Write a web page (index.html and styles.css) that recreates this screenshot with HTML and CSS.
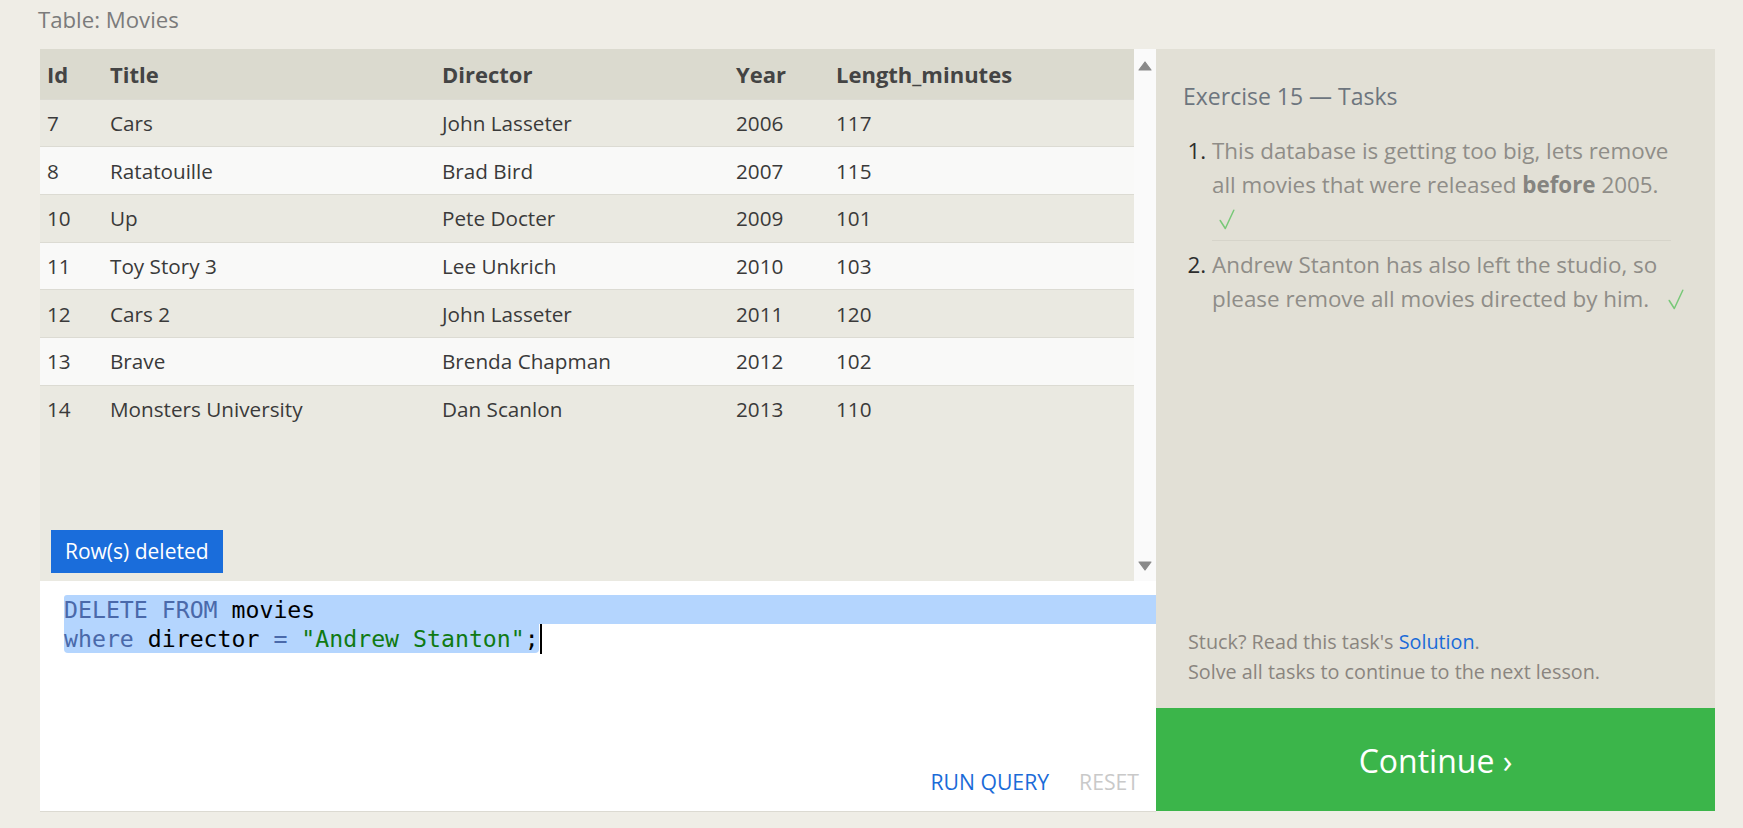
FILE: index.html
```html
<!DOCTYPE html>
<html lang="en">
<head>
<meta charset="utf-8">
<title>SQL Lesson 15: Exercise</title>
<link rel="stylesheet" href="styles.css">
</head>
<body>
<div class="page">
  <div class="table-title">Table: Movies</div>
  <div class="exercise">
    <div class="left">
      <div class="table-area">
        <div class="table-scroll">
          <table class="results">
            <thead>
              <tr><th class="c-id">Id</th><th class="c-title">Title</th><th class="c-dir">Director</th><th class="c-year">Year</th><th class="c-len">Length_minutes</th></tr>
            </thead>
            <tbody>
              <tr><td>7</td><td>Cars</td><td>John Lasseter</td><td>2006</td><td>117</td></tr>
              <tr><td>8</td><td>Ratatouille</td><td>Brad Bird</td><td>2007</td><td>115</td></tr>
              <tr><td>10</td><td>Up</td><td>Pete Docter</td><td>2009</td><td>101</td></tr>
              <tr><td>11</td><td>Toy Story 3</td><td>Lee Unkrich</td><td>2010</td><td>103</td></tr>
              <tr><td>12</td><td>Cars 2</td><td>John Lasseter</td><td>2011</td><td>120</td></tr>
              <tr><td>13</td><td>Brave</td><td>Brenda Chapman</td><td>2012</td><td>102</td></tr>
              <tr><td>14</td><td>Monsters University</td><td>Dan Scanlon</td><td>2013</td><td>110</td></tr>
            </tbody>
          </table>
          <div class="status">Row(s) deleted</div>
        </div>
        <div class="scrollbar">
          <svg class="arrow" width="14" height="10" viewBox="0 0 14 10"><path d="M7 1 L13 9 L1 9 Z" fill="#8a8a8a" stroke="#8a8a8a" stroke-linejoin="round" stroke-width="1.2"/></svg>
          <svg class="arrow" width="14" height="10" viewBox="0 0 14 10"><path d="M1 1 L13 1 L7 9 Z" fill="#8a8a8a" stroke="#8a8a8a" stroke-linejoin="round" stroke-width="1.2"/></svg>
        </div>
      </div>
      <div class="editor">
        <div class="code"><div class="line first"><span class="sel"><span class="kw">DELETE FROM</span> movies</span></div><div class="line second"><span class="sel last"><span class="kw">where</span> director <span class="kw">=</span> <span class="str">"Andrew Stanton"</span>;</span><span class="cursor"></span></div></div>
        <div class="actions">
          <span class="btn run">RUN QUERY</span>
          <span class="btn reset">RESET</span>
        </div>
      </div>
    </div>
    <div class="right">
      <div class="tasks">
        <h3 class="tasks-title">Exercise 15 — Tasks</h3>
        <ol class="task-list">
          <li class="task done">This database is getting too big, lets remove all movies that were released <strong>before</strong> 2005. <svg class="check own-line" width="16" height="21" viewBox="0 0 16 21" aria-label="done"><path d="M1.2 11.5 L6.3 19.5 L14.8 1.2" fill="none" stroke="#78c878" stroke-width="1.5" stroke-linecap="round" stroke-linejoin="round"/></svg></li>
          <li class="task done">Andrew Stanton has also left the studio, so please remove all movies directed by him. <svg class="check" width="16" height="21" viewBox="0 0 16 21" aria-label="done"><path d="M1.2 11.5 L6.3 19.5 L14.8 1.2" fill="none" stroke="#78c878" stroke-width="1.5" stroke-linecap="round" stroke-linejoin="round"/></svg></li>
        </ol>
        <div class="help">
          <div>Stuck? Read this task's <a class="link" href="#">Solution</a>.</div>
          <div>Solve all tasks to continue to the next lesson.</div>
        </div>
      </div>
      <div class="continue">Continue ›</div>
    </div>
  </div>
</div>
</body>
</html>
```

FILE: styles.css
```css
* { box-sizing: border-box; }

html, body {
  margin: 0;
  padding: 0;
  background: #efede6;
  font-family: "Open Sans", "Noto Sans", sans-serif;
}

.page {
  width: 1743px;
  height: 828px;
  overflow: hidden;
}

.table-title {
  height: 49px;
  padding-left: 38px;
  padding-top: 6px;
  font-size: 22.2px;
  line-height: 28px;
  color: #7b7b7b;
}

.exercise {
  display: flex;
  margin-left: 40px;
  width: 1675px;
  height: 762px;
}

.left {
  width: 1116px;
  display: flex;
  flex-direction: column;
}

.table-area {
  height: 532px;
  display: flex;
  background: #eae9e1;
}

.table-scroll {
  flex: 1;
  display: flex;
  flex-direction: column;
  padding-bottom: 8px;
}

.results {
  border-collapse: collapse;
  width: 100%;
  table-layout: fixed;
  font-size: 20.7px;
  color: #3a3a3a;
}

.results th {
  background: #dbdacf;
  height: 50px;
  text-align: left;
  font-weight: 700;
  font-size: 22px;
  color: #444;
  padding: 0 0 0 7px;
}

.results td {
  height: 47.7px;
  padding: 0 0 0 7px;
  border-top: 1px solid #dcdbd3;
}

.results tbody tr:nth-child(odd) td { background: #eae9e1; }
.results tbody tr:nth-child(even) td { background: #f9f9f8; }

.c-id { width: 63px; }
.c-title { width: 332px; }
.c-dir { width: 294px; }
.c-year { width: 100px; }

.status {
  margin-top: auto;
  margin-left: 11px;
  align-self: flex-start;
  background: #1a6ddb;
  color: #fff;
  font-size: 21px;
  height: 43px;
  line-height: 43px;
  padding: 0 14px;
}

.scrollbar {
  width: 22px;
  background: #fafafa;
  display: flex;
  flex-direction: column;
  justify-content: space-between;
  align-items: center;
  padding: 12px 0 10px;
}

.arrow { display: block; }

.editor {
  flex: 1;
  background: #fff;
  display: flex;
  flex-direction: column;
  box-shadow: 0 1px 0 #dcdad2;
}

.code {
  padding: 14px 0 0 24px;
  font-family: "DejaVu Sans Mono", "Liberation Mono", monospace;
  font-size: 23.2px;
  line-height: 29px;
  color: #000;
}

.line { height: 29px; white-space: pre; display: flex; }
.line.first .sel { flex: 1; border-radius: 3px 0 0 0; }
.sel { background: #b4d5fe; display: inline-block; height: 29px; }
.sel.last { border-radius: 0 0 4px 4px; }
.kw { color: #4a69aa; }
.str { color: #0f7a13; }
.cursor {
  display: inline-block;
  width: 2px;
  height: 30px;
  background: #000;
  margin-left: 1px;
}

.actions {
  margin-top: auto;
  display: flex;
  justify-content: flex-end;
  gap: 30px;
  padding: 0 17px 15px 0;
  font-size: 21.2px;
  line-height: 28px;
}

.btn.run { color: #1a6bd8; }
.btn.reset { color: #c9c9c9; }

.right {
  width: 559px;
  display: flex;
  flex-direction: column;
}

.tasks {
  flex: 1;
  background: #e2e0d6;
  display: flex;
  flex-direction: column;
  padding: 30px 21px 21px 27px;
}

.tasks-title {
  margin: 0;
  font-weight: 400;
  font-size: 23px;
  line-height: 34px;
  color: #6d757e;
}

.task-list {
  margin: 21px 0 0;
  padding: 0 0 0 29px;
  font-size: 22.4px;
  line-height: 34px;
  color: #8f8d88;
}

.task::marker { color: #2d2d2d; }

.task {
  padding: 0 0 4px 0;
}

.task + .task {
  background: linear-gradient(#d6d4ca, #d6d4ca) top left / calc(100% - 23px) 1px no-repeat;
  padding-top: 8px;
}

.task strong { color: #858480; }

.check {
  display: inline-block;
  vertical-align: -3px;
  margin-left: 13px;
}

.check.own-line {
  display: block;
  margin: 7px 0 6px 7px;
}

.help {
  margin-top: auto;
  font-size: 19.8px;
  line-height: 30px;
  color: #8a857f;
  padding-left: 5px;
}

.link { color: #1a6bd8; text-decoration: none; }

.continue {
  height: 103px;
  background: #3bb54a;
  color: #fff;
  font-size: 32px;
  display: flex;
  align-items: center;
  justify-content: center;
  padding-top: 2px;
}
```
